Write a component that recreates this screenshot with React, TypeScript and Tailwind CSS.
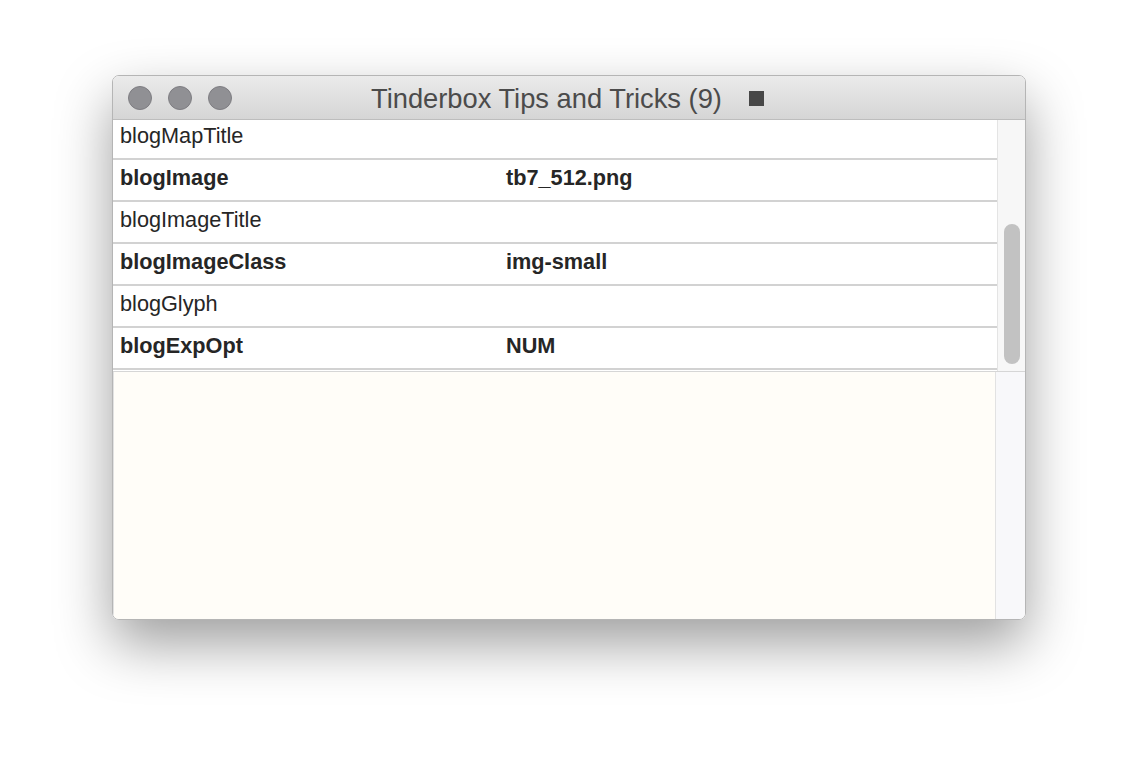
import React from "react";

const rows: Array<{ name: string; value: string; bold: boolean }> = [
  { name: "blogMapTitle", value: "", bold: false },
  { name: "blogImage", value: "tb7_512.png", bold: true },
  { name: "blogImageTitle", value: "", bold: false },
  { name: "blogImageClass", value: "img-small", bold: true },
  { name: "blogGlyph", value: "", bold: false },
  { name: "blogExpOpt", value: "NUM", bold: true },
];

function TrafficLight() {
  return <div className="h-[24px] w-[24px] rounded-full border border-[#7e7d82] bg-[#909094]" />;
}

export default function App() {
  return (
    <div
      className="h-[768px] w-[1138px] overflow-hidden bg-white pl-[112px] pt-[75px]"
      style={{ fontFamily: '"Liberation Sans", Arial, sans-serif' }}
    >
      <div className="flex h-[545px] w-[914px] flex-col overflow-hidden rounded-[7px] border border-[#b5b5b5] shadow-[0_24px_55px_rgba(0,0,0,0.38)]">
        {/* title bar */}
        <div className="relative flex h-[44px] shrink-0 items-center border-b border-[#bdbdbd] bg-gradient-to-b from-[#ebebeb] to-[#d5d5d5] px-[15px]">
          <div className="flex gap-[16px]">
            <TrafficLight />
            <TrafficLight />
            <TrafficLight />
          </div>
          <div className="absolute left-[258px] top-[3px] flex items-center gap-[27px]">
            <span className="text-[27.3px] text-[#4b4b4b]">Tinderbox Tips and Tricks (9)</span>
            <span className="mb-[2px] h-[15px] w-[15px] bg-[#474747]" />
          </div>
        </div>

        {/* attribute table */}
        <div className="flex h-[251px] shrink-0">
          <div className="flex-1 overflow-hidden bg-white">
            <div className="-mt-[2px]">
              {rows.map((r) => (
                <div
                  key={r.name}
                  className={`flex h-[42px] items-center border-b-2 border-[#d2d2d2] pb-[4px] pl-[7px] text-[21.7px] text-[#262626] ${
                    r.bold ? "font-bold" : ""
                  }`}
                >
                  <span className="w-[386px]">{r.name}</span>
                  <span>{r.value}</span>
                </div>
              ))}
            </div>
          </div>
          <div className="w-[28px] shrink-0 border-l border-[#e4e4e4] bg-[#f7f7f7] pl-[6px] pt-[104px]">
            <div className="h-[140px] w-[16px] rounded-full bg-[#c2c2c2]" />
          </div>
        </div>

        {/* text pane */}
        <div className="flex flex-1 border-t border-[#d6d6d6]">
          <div className="flex-1 border-l border-[#e2e2e2] bg-[#fffdf8]" />
          <div className="w-[30px] shrink-0 border-l border-[#e2e2e2] bg-[#f8f8fa]" />
        </div>
      </div>
    </div>
  );
}
